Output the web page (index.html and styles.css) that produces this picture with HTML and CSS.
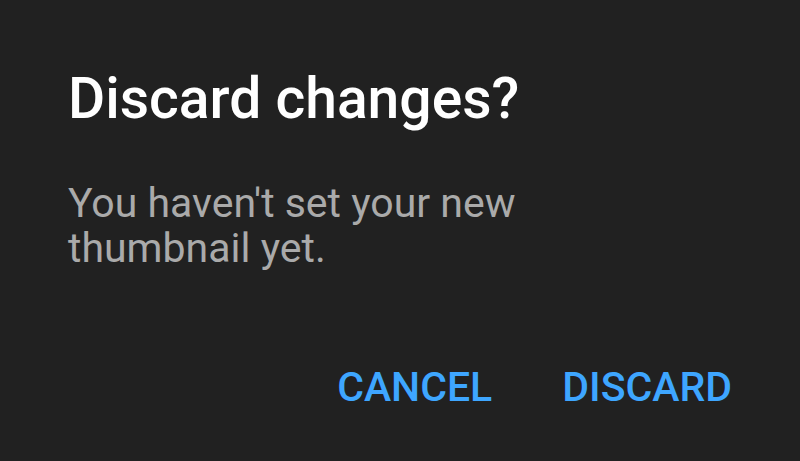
FILE: index.html
```html
<!DOCTYPE html>
<html>
<head>
<meta charset="utf-8">
<link rel="stylesheet" href="styles.css">
</head>
<body>
<div class="dialog">
  <h1 class="title">Discard changes?</h1>
  <p class="message">You haven't set your new thumbnail yet.</p>
  <div class="actions">
    <button class="action">CANCEL</button>
    <button class="action">DISCARD</button>
  </div>
</div>
</body>
</html>
```
FILE: styles.css
```css
html, body {
  margin: 0;
  padding: 0;
  background: #212121;
  width: 800px;
  height: 461px;
  overflow: hidden;
}
.dialog {
  font-family: Roboto, "Noto Sans", sans-serif;
  padding: 63px 68px 0 68px;
  display: flex;
  flex-direction: column;
}
.title {
  margin: 0;
  font-size: 57px;
  font-weight: 500;
  color: #ffffff;
  line-height: 72px;
}
.message {
  margin: 46px 0 0 0;
  width: 470px;
  font-size: 41px;
  font-weight: 400;
  color: #aaaaaa;
  line-height: 45px;
}
.actions {
  display: flex;
  justify-content: flex-end;
  gap: 70px;
  margin-top: 92px;
}
.action {
  background: none;
  border: none;
  padding: 0;
  font-family: Roboto, "Noto Sans", sans-serif;
  font-size: 41px;
  font-weight: 500;
  color: #3ea6ff;
  line-height: 48px;
}
```
